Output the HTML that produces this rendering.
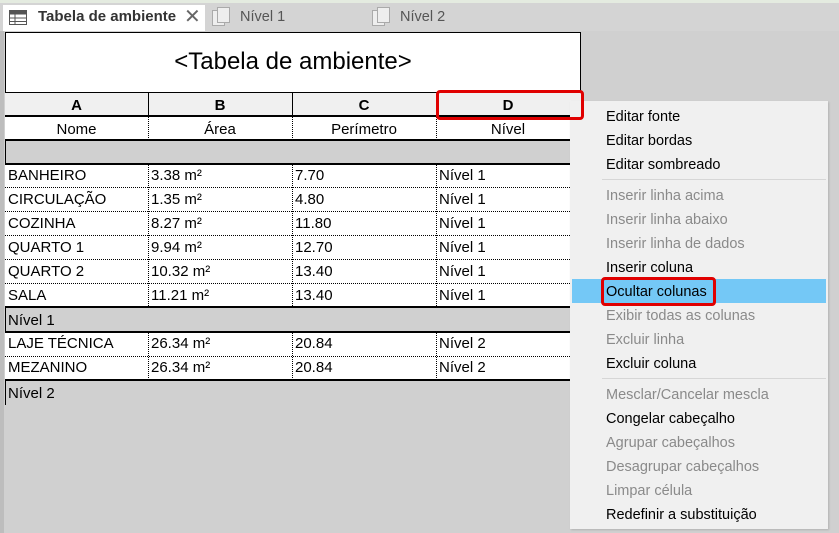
<!DOCTYPE html>
<html><head><meta charset="utf-8"><style>
*{margin:0;padding:0;box-sizing:border-box}
body{width:839px;height:533px;overflow:hidden;background:#d0d0d0;font-family:"Liberation Sans",Arial,sans-serif;position:relative}
.a{position:absolute}
.cell{position:absolute;font-size:15px;color:#000;line-height:23px;white-space:nowrap}
.m{position:absolute;left:606px;font-size:14.5px;line-height:24px;white-space:nowrap;color:#000}
.d{color:#8a8a8a}
</style></head><body>
<div class="a" style="left:0;top:0;width:839px;height:31px;background:#d4d4d4"></div>
<div class="a" style="left:0;top:0;width:839px;height:3px;background:#e4ebe0"></div>
<div class="a" style="left:3px;top:5px;width:202px;height:26px;background:#fff"></div>
<svg class="a" style="left:9px;top:10px" width="18" height="15"><rect x="0.5" y="0.5" width="17" height="14" fill="#fff" stroke="#555"/><rect x="0.5" y="0.5" width="17" height="4" fill="#555"/><line x1="6" y1="4" x2="6" y2="15" stroke="#555"/><line x1="0" y1="8" x2="18" y2="8" stroke="#555"/><line x1="0" y1="11.5" x2="18" y2="11.5" stroke="#555"/></svg>
<div class="a" style="left:38px;top:8px;font-size:15px;font-weight:bold;color:#333">Tabela de ambiente</div>
<div class="a" style="left:184px;top:4px;font-size:20px;color:#666">✕</div>
<svg class="a" style="left:212px;top:7px" width="18" height="20"><rect x="0.5" y="3.5" width="12" height="15" fill="#eee" stroke="#aaa"/><rect x="5.5" y="0.5" width="12" height="15" fill="#eee" stroke="#aaa"/></svg>
<div class="a" style="left:240px;top:9px;font-size:14.5px;color:#555">Nível 1</div>
<svg class="a" style="left:372px;top:7px" width="18" height="20"><rect x="0.5" y="3.5" width="12" height="15" fill="#eee" stroke="#aaa"/><rect x="5.5" y="0.5" width="12" height="15" fill="#eee" stroke="#aaa"/></svg>
<div class="a" style="left:400px;top:9px;font-size:14.5px;color:#555">Nível 2</div>
<div class="a" style="left:0;top:31px;width:4px;height:502px;background:#bdbdbd"></div>
<div class="a" style="left:5px;top:32px;width:1px;height:373px;background:#000"></div>
<div class="a" style="left:5px;top:32px;width:576px;height:61px;background:#fff;border:1px solid #000;font-size:24px;text-align:center;line-height:57px">&lt;Tabela de ambiente&gt;</div>
<div class="a" style="left:5px;top:93px;width:576px;height:24px;background:#f0f0f0;border-bottom:2px solid #000"></div>
<div class="a" style="left:148px;top:93px;width:1px;height:23px;background:#000"></div>
<div class="a" style="left:292px;top:93px;width:1px;height:23px;background:#000"></div>
<div class="cell" style="left:5px;top:94px;width:143px;text-align:center;font-weight:bold">A</div>
<div class="cell" style="left:148px;top:94px;width:144px;text-align:center;font-weight:bold">B</div>
<div class="cell" style="left:292px;top:94px;width:144px;text-align:center;font-weight:bold">C</div>
<div class="cell" style="left:436px;top:94px;width:144px;text-align:center;font-weight:bold">D</div>
<div class="a" style="left:5px;top:117px;width:576px;height:24px;background:#fff;border-bottom:2px solid #000"></div>
<div class="cell" style="left:5px;top:118px;width:143px;text-align:center">Nome</div>
<div class="cell" style="left:148px;top:118px;width:144px;text-align:center">Área</div>
<div class="cell" style="left:292px;top:118px;width:144px;text-align:center">Perímetro</div>
<div class="cell" style="left:436px;top:118px;width:144px;text-align:center">Nível</div>
<div class="a" style="left:5px;top:163px;width:576px;height:145px;background:#fff;border-top:2px solid #000;border-bottom:2px solid #000"></div>
<div class="a" style="left:5px;top:331px;width:576px;height:50px;background:#fff;border-top:2px solid #000;border-bottom:2px solid #000"></div>
<svg class="a" style="left:0;top:0" width="580" height="400">
<g stroke="#000" stroke-dasharray="1,1" stroke-width="1">
<line x1="148.5" y1="117" x2="148.5" y2="140"/><line x1="292.5" y1="117" x2="292.5" y2="140"/><line x1="436.5" y1="117" x2="436.5" y2="140"/>
<line x1="148.5" y1="165" x2="148.5" y2="306"/><line x1="292.5" y1="165" x2="292.5" y2="306"/><line x1="436.5" y1="165" x2="436.5" y2="306"/>
<line x1="148.5" y1="333" x2="148.5" y2="379"/><line x1="292.5" y1="333" x2="292.5" y2="379"/><line x1="436.5" y1="333" x2="436.5" y2="379"/>
<line x1="5" y1="187.5" x2="580" y2="187.5"/><line x1="5" y1="211.5" x2="580" y2="211.5"/><line x1="5" y1="235.5" x2="580" y2="235.5"/><line x1="5" y1="259.5" x2="580" y2="259.5"/><line x1="5" y1="283.5" x2="580" y2="283.5"/>
<line x1="5" y1="356.5" x2="580" y2="356.5"/>
</g></svg>
<div class="cell" style="left:8px;top:164px">BANHEIRO</div><div class="cell" style="left:151px;top:164px">3.38 m²</div><div class="cell" style="left:295px;top:164px">7.70</div><div class="cell" style="left:439px;top:164px">Nível 1</div>
<div class="cell" style="left:8px;top:188px">CIRCULAÇÃO</div><div class="cell" style="left:151px;top:188px">1.35 m²</div><div class="cell" style="left:295px;top:188px">4.80</div><div class="cell" style="left:439px;top:188px">Nível 1</div>
<div class="cell" style="left:8px;top:212px">COZINHA</div><div class="cell" style="left:151px;top:212px">8.27 m²</div><div class="cell" style="left:295px;top:212px">11.80</div><div class="cell" style="left:439px;top:212px">Nível 1</div>
<div class="cell" style="left:8px;top:236px">QUARTO 1</div><div class="cell" style="left:151px;top:236px">9.94 m²</div><div class="cell" style="left:295px;top:236px">12.70</div><div class="cell" style="left:439px;top:236px">Nível 1</div>
<div class="cell" style="left:8px;top:260px">QUARTO 2</div><div class="cell" style="left:151px;top:260px">10.32 m²</div><div class="cell" style="left:295px;top:260px">13.40</div><div class="cell" style="left:439px;top:260px">Nível 1</div>
<div class="cell" style="left:8px;top:284px">SALA</div><div class="cell" style="left:151px;top:284px">11.21 m²</div><div class="cell" style="left:295px;top:284px">13.40</div><div class="cell" style="left:439px;top:284px">Nível 1</div>
<div class="cell" style="left:8px;top:309px">Nível 1</div>
<div class="cell" style="left:8px;top:332px">LAJE TÉCNICA</div><div class="cell" style="left:151px;top:332px">26.34 m²</div><div class="cell" style="left:295px;top:332px">20.84</div><div class="cell" style="left:439px;top:332px">Nível 2</div>
<div class="cell" style="left:8px;top:356px">MEZANINO</div><div class="cell" style="left:151px;top:356px">26.34 m²</div><div class="cell" style="left:295px;top:356px">20.84</div><div class="cell" style="left:439px;top:356px">Nível 2</div>
<div class="cell" style="left:8px;top:382px">Nível 2</div>
<div class="a" style="left:570px;top:101px;width:258px;height:428px;background:#f0f0f0;box-shadow:1px 1px 2px rgba(0,0,0,.15)"></div>
<div class="a" style="left:572px;top:279px;width:254px;height:24px;background:#74c8f6"></div>
<div class="a" style="left:602px;top:179px;width:224px;height:1px;background:#d6d6d6"></div>
<div class="a" style="left:602px;top:378px;width:224px;height:1px;background:#d6d6d6"></div>
<div class="m" style="top:105px">Editar fonte</div>
<div class="m" style="top:129px">Editar bordas</div>
<div class="m" style="top:153px">Editar sombreado</div>
<div class="m d" style="top:184px">Inserir linha acima</div>
<div class="m d" style="top:208px">Inserir linha abaixo</div>
<div class="m d" style="top:232px">Inserir linha de dados</div>
<div class="m" style="top:256px">Inserir coluna</div>
<div class="m" style="top:280px">Ocultar colunas</div>
<div class="m d" style="top:304px">Exibir todas as colunas</div>
<div class="m d" style="top:328px">Excluir linha</div>
<div class="m" style="top:352px">Excluir coluna</div>
<div class="m d" style="top:383px">Mesclar/Cancelar mescla</div>
<div class="m" style="top:407px">Congelar cabeçalho</div>
<div class="m d" style="top:431px">Agrupar cabeçalhos</div>
<div class="m d" style="top:455px">Desagrupar cabeçalhos</div>
<div class="m d" style="top:479px">Limpar célula</div>
<div class="m" style="top:503px">Redefinir a substituição</div>
<div class="a" style="left:436px;top:90px;width:148px;height:30px;border:3px solid #e00000;border-radius:4px"></div>
<div class="a" style="left:601px;top:277px;width:115px;height:29px;border:3px solid #e00000;border-radius:4px"></div>
</body></html>
